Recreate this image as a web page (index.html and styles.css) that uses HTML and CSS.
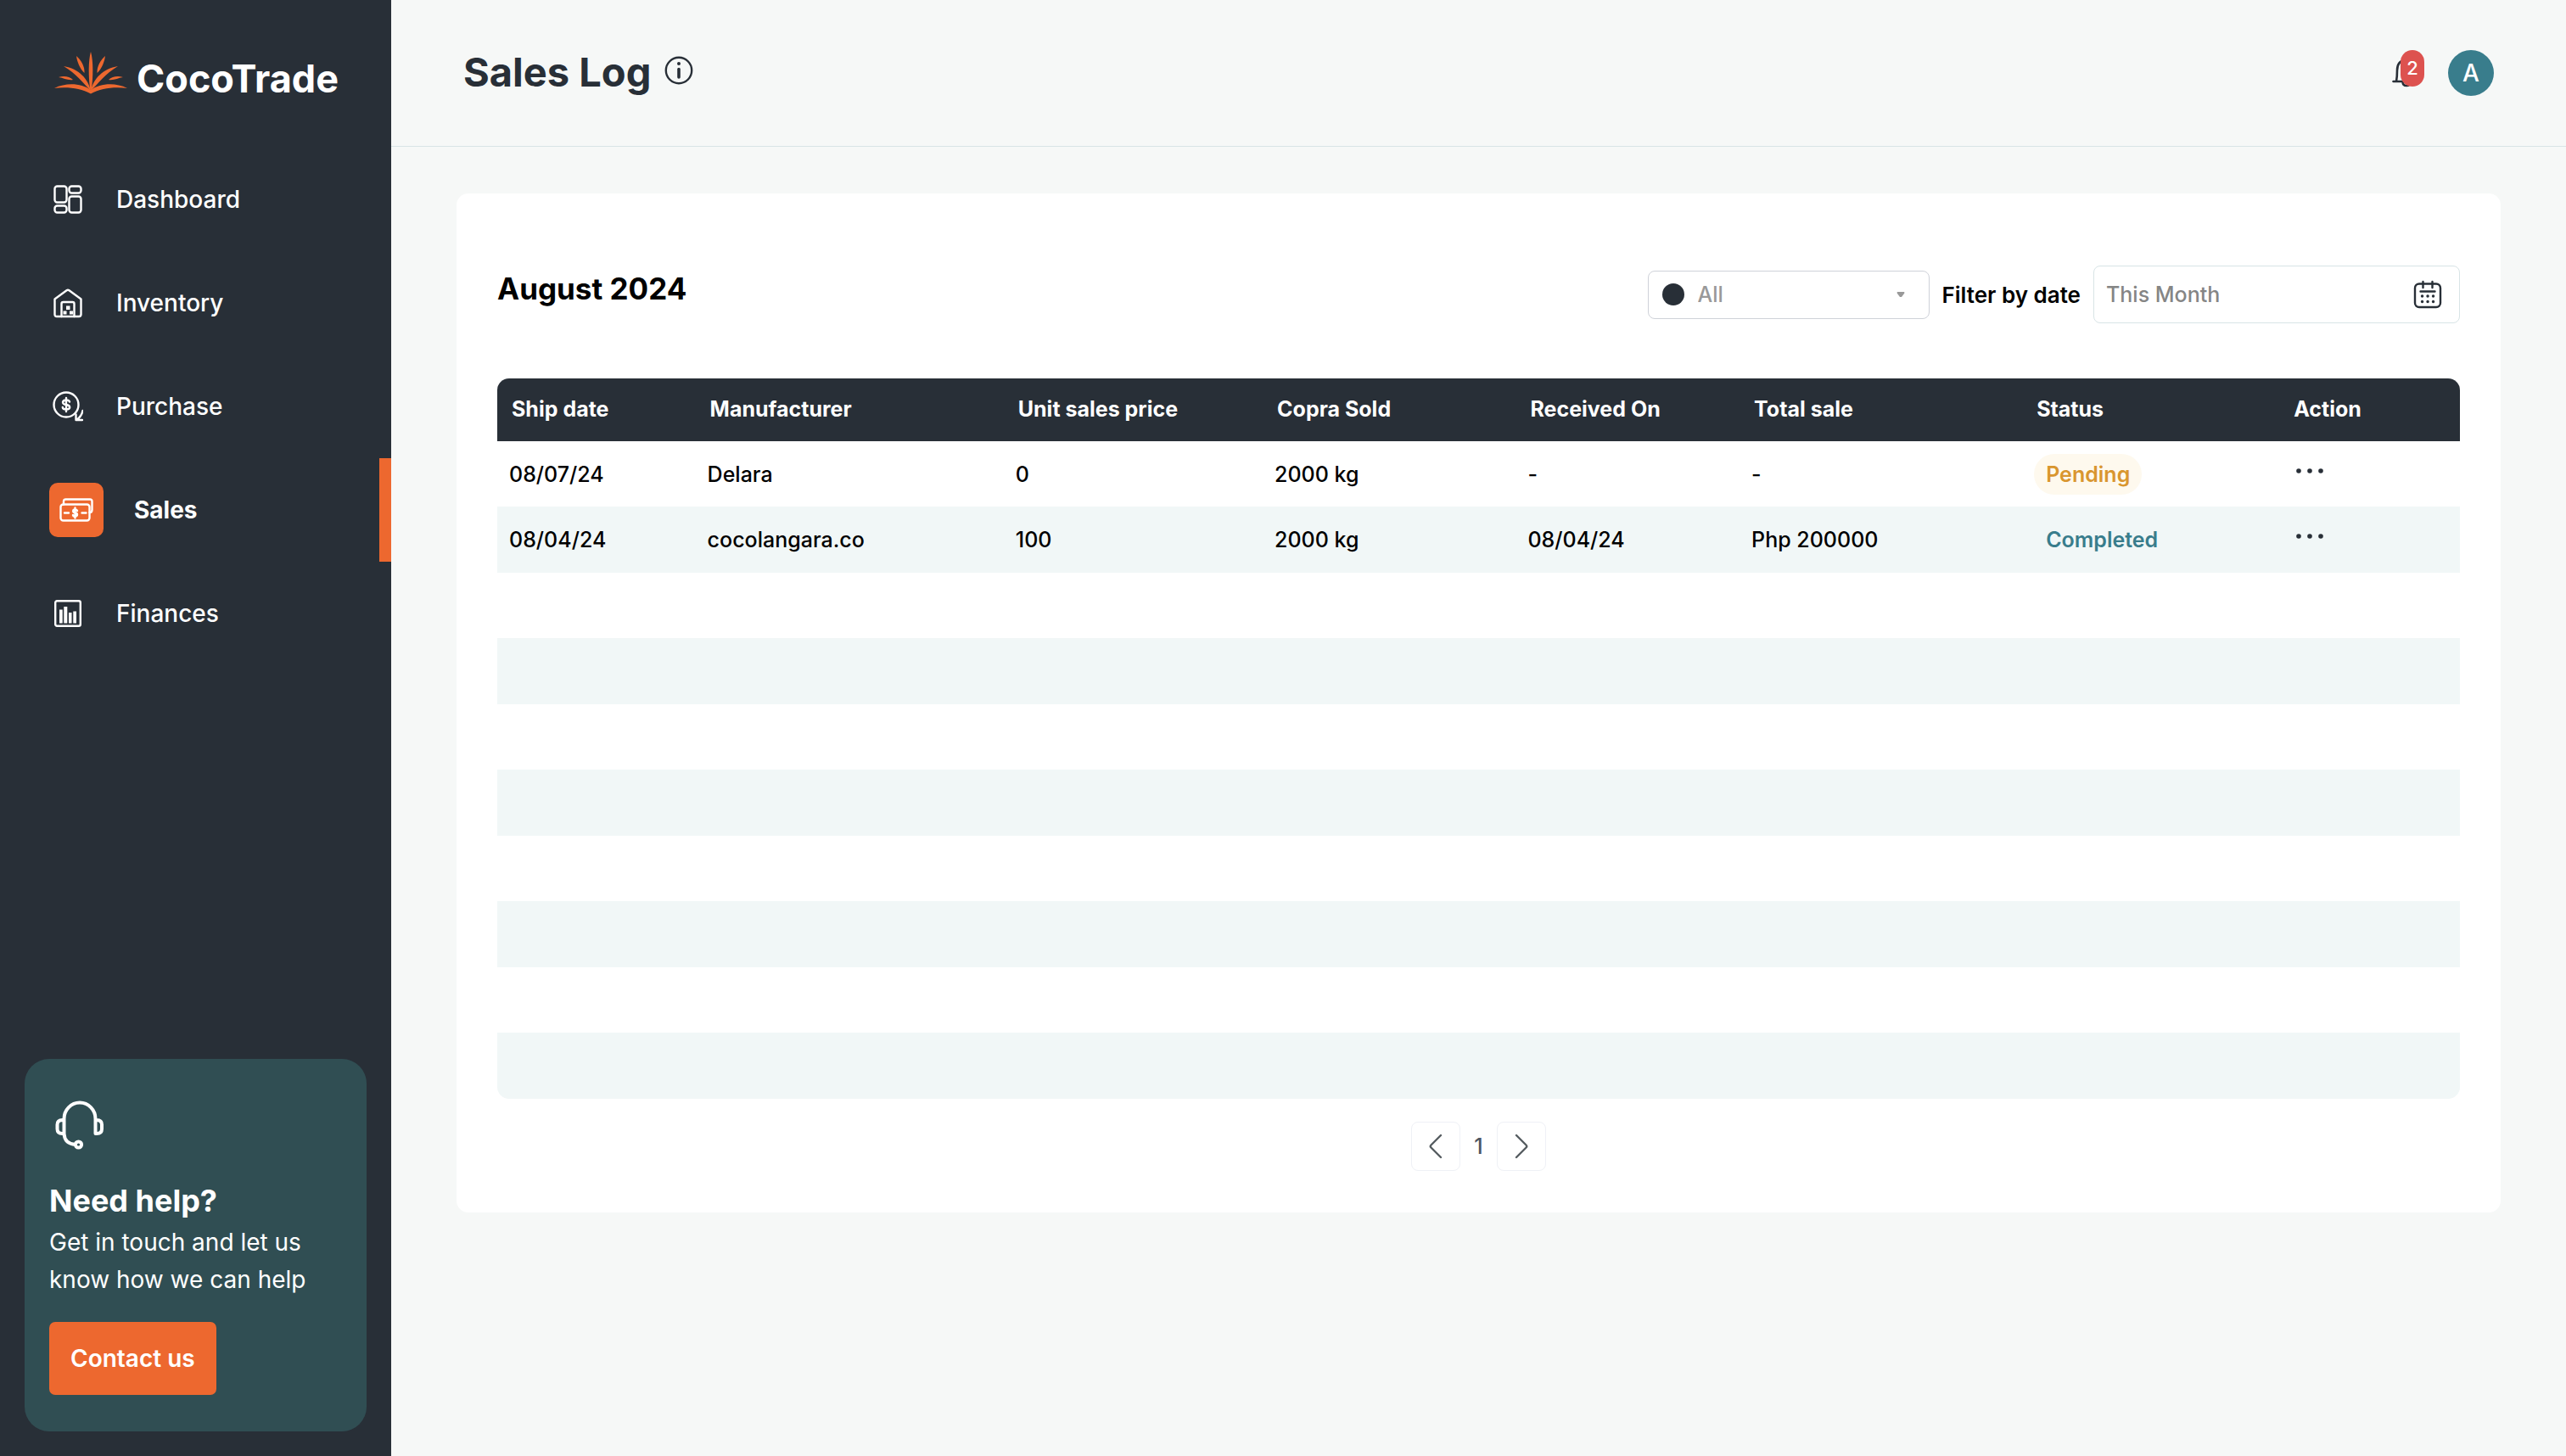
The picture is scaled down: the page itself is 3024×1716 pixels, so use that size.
FILE: index.html
```html
<!DOCTYPE html>
<html lang="en">
<head>
<meta charset="utf-8">
<meta name="viewport" content="width=device-width, initial-scale=1">
<title>Sales Log - CocoTrade</title>
<link rel="stylesheet" href="styles.css">
</head>
<body>
<div class="app">
  <aside class="sidebar">
    <a class="brand" href="#">
      <svg class="brand-mark" viewBox="0 0 86 50" aria-hidden="true">
        <path d="M43 0C46 10 46 30 43.500 47H42.500C40 30 40 10 43 0Z"/>
        <path d="M11 17C29 20 40 32 43 46C34 37 26 26 11 17Z"/>
        <path d="M75 17C57 20 46 32 43 46C52 37 60 26 75 17Z"/>
        <path d="M26 5C31 9 36 17 35.500 25C30 20 27 12 26 5Z"/>
        <path d="M60 5C55 9 50 17 50.500 25C56 20 59 12 60 5Z"/>
        <path d="M5 30C11 28 18 29 22 33C16 34 11 31 5 30Z"/>
        <path d="M81 30C75 28 68 29 64 33C70 34 75 31 81 30Z"/>
        <path d="M0 43C14 36 32 37 43 45C54 37 72 36 86 43C70 41 55 43 43 49.500C31 43 16 41 0 43Z"/>
      </svg>
      <span>CocoTrade</span>
    </a>
    <nav class="nav" aria-label="Main">
      <a class="nav-item" href="#">
        <span class="nav-icon"><svg viewBox="0 0 36 36" aria-hidden="true"><rect x="2.500" y="2.500" width="14" height="19" rx="3"/><rect x="19.500" y="2.500" width="14" height="8" rx="3"/><rect x="2.500" y="25.500" width="14" height="8" rx="3"/><rect x="19.500" y="14.500" width="14" height="19" rx="3"/></svg></span>
        <span>Dashboard</span>
      </a>
      <a class="nav-item" href="#">
        <span class="nav-icon"><svg viewBox="0 0 36 36" aria-hidden="true"><path d="M2.500 13.500L16.500 3.300Q18 2.200 19.500 3.300L33.500 13.500V31.500Q33.500 34 31 34H5Q2.500 34 2.500 31.500Z"/><path d="M10.500 34V19Q10.500 17 12.500 17H23.500Q25.500 17 25.500 19V34"/><path class="solid" d="M16 21.500h4.500v4.500H16zM12.500 27.500h4v4h-4zM20 27.500h4v4h-4z"/></svg></span>
        <span>Inventory</span>
      </a>
      <a class="nav-item" href="#">
        <span class="nav-icon"><svg viewBox="0 0 36 36" aria-hidden="true"><circle cx="16" cy="16" r="14.500"/><path d="M20 12.500Q19.500 10.500 16 10.500T12 13Q12 15.500 16 16T20.200 19Q20.200 21.500 16 21.500T11.800 19M16 8V24"/><path d="M35.500 23Q34 30 28.500 33.500M27.500 27.500V34H35"/></svg></span>
        <span>Purchase</span>
      </a>
      <a class="nav-item active" href="#" aria-current="page">
        <span class="nav-icon"><svg viewBox="0 0 40 28" aria-hidden="true"><rect x="1.500" y="7.500" width="34" height="19" rx="3"/><path d="M5 7.500V4Q5 1.500 7.500 1.500H36Q38.500 1.500 38.500 4V14Q38.500 17 35.500 17M6 17.500H11M26.500 17.500H31.500M21 15Q20.500 13.500 18.500 13.500Q16.200 13.500 16.200 15.300Q16.200 17 18.500 17.300Q21 17.700 21 19.600Q21 21.500 18.500 21.500Q16.200 21.500 16 20M18.500 11.500V23.500"/></svg></span>
        <span>Sales</span>
      </a>
      <a class="nav-item" href="#">
        <span class="nav-icon"><svg viewBox="0 0 36 36" aria-hidden="true"><rect x="3.200" y="3.200" width="29.600" height="29.600" rx="2"/><path class="solid" d="M8 13.500h3.700v16H8zM13.300 10h4v19.500h-4zM19 17h3.500v12.500H19zM24.300 15.500h3.700v14h-3.700z"/></svg></span>
        <span>Finances</span>
      </a>
    </nav>
    <section class="help">
      <svg class="help-icon" viewBox="0 0 60 60" aria-hidden="true"><path d="M11.500 40V22.500A18.500 19 0 0 1 48.500 22.500V40H50Q56 40 56 34.500V29.500Q56 24 50 24H48.500M11.500 24H9.500Q3.500 24 3.500 29.500V34.500Q3.500 40 9.500 40H11.500Q12 52 25 53"/><circle cx="28.500" cy="53" r="3.600"/></svg>
      <h2>Need help?</h2>
      <p>Get in touch and let us know how we can help</p>
      <button class="contact" type="button">Contact us</button>
    </section>
  </aside>

  <div class="page">
    <header class="topbar">
      <h1>Sales Log</h1>
      <button class="icon-button info" type="button" aria-label="About the sales log"><svg viewBox="0 0 34 34" aria-hidden="true"><circle cx="17" cy="17" r="15.200"/><path class="info-stem" d="M17 15.500V25"/><circle class="info-dot" cx="17" cy="9" r="2"/></svg></button>
      <div class="account">
        <button class="icon-button bell" type="button" aria-label="Notifications, 2 unread">
          <svg viewBox="0 0 34 38" aria-hidden="true"><path d="M1.500 31H32.500M5 31Q6 26 6 18Q6 6 17 6T28 18Q28 26 29 31M17 6V2M12.500 31Q12.500 36 17 36T21.500 31"/></svg>
          <span class="badge">2</span>
        </button>
        <button class="avatar" type="button" aria-label="Account A">A</button>
      </div>
    </header>

    <main class="card">
      <div class="toolbar">
        <h2>August 2024</h2>
        <div class="filters">
          <div class="select-box">
            <span class="dot"></span>
            <select aria-label="Status"><option>All</option><option>Pending</option><option>Completed</option></select>
            <svg class="caret" viewBox="0 0 10 8" aria-hidden="true"><path d="M1 1H9Q10 2 9 3L6 7H4L1 3Q0 2 1 1Z"/></svg>
          </div>
          <label for="date">Filter by date</label>
          <div class="date-box">
            <input id="date" type="text" placeholder="This Month">
            <button class="icon-button calendar" type="button" aria-label="Open calendar"><svg viewBox="0 0 34 34" aria-hidden="true"><rect x="2" y="4.500" width="30" height="27.500" rx="5"/><path d="M11.500 2V9M22.500 2V9M8.500 13.500H25.500"/><path class="cal-dots" d="M10.500 19h.1M17 19h.1M23.500 19h.1M10.500 25.500h.1M17 25.500h.1M23.500 25.500h.1"/></svg></button>
          </div>
        </div>
      </div>

      <table class="sales">
        <colgroup><col class="c-ship"><col class="c-maker"><col class="c-price"><col class="c-copra"><col class="c-received"><col class="c-total"><col class="c-status"><col class="c-action"></colgroup>
        <thead>
          <tr><th>Ship date</th><th>Manufacturer</th><th>Unit sales price</th><th>Copra Sold</th><th>Received On</th><th>Total sale</th><th>Status</th><th>Action</th></tr>
        </thead>
        <tbody>
          <tr><td>08/07/24</td><td>Delara</td><td>0</td><td>2000 kg</td><td>-</td><td>-</td><td><span class="status pending">Pending</span></td><td><button class="icon-button more" type="button" aria-label="Actions for Delara"><svg viewBox="0 0 32 6" aria-hidden="true"><circle cx="3" cy="3" r="2.800"/><circle cx="16" cy="3" r="2.800"/><circle cx="29" cy="3" r="2.800"/></svg></button></td></tr>
          <tr><td>08/04/24</td><td>cocolangara.co</td><td>100</td><td>2000 kg</td><td>08/04/24</td><td>Php 200000</td><td><span class="status completed">Completed</span></td><td><button class="icon-button more" type="button" aria-label="Actions for cocolangara.co"><svg viewBox="0 0 32 6" aria-hidden="true"><circle cx="3" cy="3" r="2.800"/><circle cx="16" cy="3" r="2.800"/><circle cx="29" cy="3" r="2.800"/></svg></button></td></tr>
          <tr><td colspan="8"></td></tr>
          <tr><td colspan="8"></td></tr>
          <tr><td colspan="8"></td></tr>
          <tr><td colspan="8"></td></tr>
          <tr><td colspan="8"></td></tr>
          <tr><td colspan="8"></td></tr>
          <tr><td colspan="8"></td></tr>
          <tr><td colspan="8"></td></tr>
        </tbody>
      </table>

      <nav class="pager" aria-label="Pages">
        <button type="button" aria-label="Previous page"><svg viewBox="0 0 16 30" aria-hidden="true"><path d="M14 2L2.500 13.500Q1 15 2.500 16.500L14 28"/></svg></button>
        <span>1</span>
        <button type="button" aria-label="Next page"><svg viewBox="0 0 16 30" aria-hidden="true"><path d="M2 2L13.500 13.500Q15 15 13.500 16.500L2 28"/></svg></button>
      </nav>
    </main>
  </div>
</div>
</body>
</html>
```
FILE: styles.css
```css
* { box-sizing: border-box; }

body {
  margin: 0;
  background: #f6f8f7;
  color: #000;
  font-family: Inter, "Liberation Sans", sans-serif;
  font-size: 25px;
  font-weight: 500;
}

h1, h2, p { margin: 0; }
button, input, select { font: inherit; color: inherit; }
a { color: inherit; text-decoration: none; }
svg { display: block; fill: none; stroke: currentColor; stroke-linecap: round; stroke-linejoin: round; }

.app {
  display: grid;
  grid-template-columns: 461px 1fr;
  min-height: 100vh;
}

/* Sidebar */
.sidebar {
  display: flex;
  flex-direction: column;
  background: #282f37;
  color: #fff;
}

.brand {
  display: flex;
  align-items: flex-start;
  gap: 11px;
  height: 174px;
  padding: 61px 0 0 64px;
  font-size: 45px;
  line-height: 64px;
  font-weight: 700;
}

.brand-mark {
  width: 86px;
  height: 50px;
  fill: #ed682f;
  stroke: none;
}

.nav-item {
  display: flex;
  align-items: center;
  gap: 36px;
  height: 122px;
  padding-left: 58px;
  font-size: 28px;
}

.nav-icon {
  display: grid;
  place-items: center;
  width: 43px;
  height: 64px;
}

.nav-icon svg { width: 36px; height: 36px; stroke-width: 2.4; }
.nav-icon .solid { fill: currentColor; stroke: none; }

.nav-item.active {
  border-right: 14px solid #ed682f;
  font-weight: 700;
}

.nav-item.active .nav-icon {
  width: 64px;
  border-radius: 10px;
  background: #ed682f;
}

.nav-item.active svg { width: 40px; height: 28px; }

.help {
  margin: auto 29px 29px;
  padding: 48px 29px 43px;
  border-radius: 29px;
  background: #304e53;
}

.help-icon {
  width: 60px;
  height: 60px;
  margin-left: 6px;
  stroke-width: 4;
}

.help h2 {
  margin: 34px 0 2px;
  font-size: 36px;
  line-height: 50px;
}

.help p {
  font-size: 28px;
  line-height: 44px;
  font-weight: 400;
}

.contact {
  height: 86px;
  margin-top: 28px;
  padding: 0 25px;
  border: 0;
  border-radius: 7px;
  background: #ed682f;
  font-size: 28px;
  font-weight: 600;
}

/* Top bar */
.topbar {
  display: flex;
  align-items: center;
  height: 173px;
  padding: 0 85px;
  border-bottom: 1px solid #d8e4e6;
  color: #282f37;
}

.topbar h1 {
  padding-bottom: 2px;
  font-size: 47px;
  line-height: 64px;
}

.icon-button {
  padding: 0;
  border: 0;
  background: none;
}

.info { margin-left: 16px; padding-bottom: 6px; }
.info svg { width: 34px; height: 34px; stroke-width: 2.4; }
.info .info-stem { stroke-width: 3.6; }
.info .info-dot { fill: currentColor; stroke: none; }

.account {
  display: flex;
  align-items: center;
  gap: 32px;
  margin-left: auto;
}

.bell { position: relative; padding-bottom: 4px; }
.bell svg { width: 34px; height: 38px; stroke-width: 2.6; }

.badge {
  position: absolute;
  top: -6px;
  right: -4px;
  width: 28px;
  border-radius: 14px;
  background: #dd524f;
  color: #fff;
  font-size: 22px;
  line-height: 43px;
  text-align: center;
}

.avatar {
  width: 54px;
  height: 54px;
  padding: 0;
  border: 0;
  border-radius: 50%;
  background: #397d8c;
  color: #fff;
  font-size: 28px;
}

/* Card */
.card {
  margin: 55px 77px;
  padding: 85px 48px 49px;
  border-radius: 14px;
  background: #fff;
}

.toolbar {
  display: flex;
  justify-content: space-between;
  align-items: flex-start;
}

.toolbar h2 { font-size: 35px; line-height: 54px; }

.filters {
  display: flex;
  align-items: center;
  gap: 15px;
}

.filters label { font-size: 26px; font-weight: 600; }

.select-box, .date-box {
  display: flex;
  align-items: center;
  border-radius: 8px;
}

.select-box {
  width: 332px;
  height: 57px;
  padding: 0 28px 0 16px;
  gap: 16px;
  border: 1px solid #cfd2d9;
  color: #999;
}

.dot {
  width: 26px;
  height: 26px;
  border-radius: 50%;
  background: #282f37;
}

.select-box select {
  flex: 1;
  padding: 0;
  border: 0;
  background: none;
  appearance: none;
}

.caret { width: 10px; height: 8px; fill: #999; stroke: none; }

.date-box {
  width: 432px;
  height: 68px;
  padding: 0 20px 0 14px;
  border: 1px solid #d8e4e6;
}

.date-box input {
  flex: 1;
  min-width: 0;
  padding: 0;
  border: 0;
  background: none;
}

.date-box input::placeholder { color: #858585; opacity: 1; }
.calendar { color: #282f37; }
.calendar svg { width: 34px; height: 34px; stroke-width: 2.4; }
.calendar .cal-dots { stroke-width: 3.4; }

/* Table */
.sales {
  width: 100%;
  margin-top: 65px;
  border-spacing: 0;
  table-layout: fixed;
}

.c-ship { width: 10.1%; }
.c-maker { width: 15.7%; }
.c-price { width: 13.2%; }
.c-copra { width: 12.9%; }
.c-received { width: 11.4%; }
.c-total { width: 14.4%; }
.c-status { width: 13.1%; }
.c-action { width: 9.2%; }

.sales th {
  height: 74px;
  padding: 0 0 2px 17px;
  background: #282f37;
  color: #fff;
  font-weight: 700;
  text-align: left;
}

.sales th:first-child { border-top-left-radius: 14px; }
.sales th:last-child { border-top-right-radius: 14px; }

.sales td { height: 77px; padding: 0 0 0 14px; }
.sales tbody tr:nth-child(even) td { height: 78px; background: #f1f7f7; }
.sales tbody tr:last-child td { border-radius: 0 0 14px 14px; }

.status {
  display: inline-block;
  padding: 0 14px;
  border-radius: 24px;
  line-height: 48px;
  font-weight: 600;
}

.pending { background: #fef9ee; color: #d9962f; }
.completed { background: #f1f7f7; color: #397d8c; }

.more {
  display: block;
  padding: 8px 6px 16px;
  color: #282f37;
}

.more svg { width: 32px; height: 6px; fill: currentColor; stroke: none; }

/* Pager */
.pager {
  display: flex;
  justify-content: center;
  align-items: center;
  margin-top: 27px;
  color: #4d5562;
}

.pager span { width: 43px; text-align: center; }

.pager button {
  display: grid;
  place-items: center;
  width: 58px;
  height: 58px;
  padding: 0;
  border: 1px solid #eff1f6;
  border-radius: 8px;
  background: none;
  color: #555c60;
}

.pager svg { width: 16px; height: 30px; stroke-width: 2.4; }
```
